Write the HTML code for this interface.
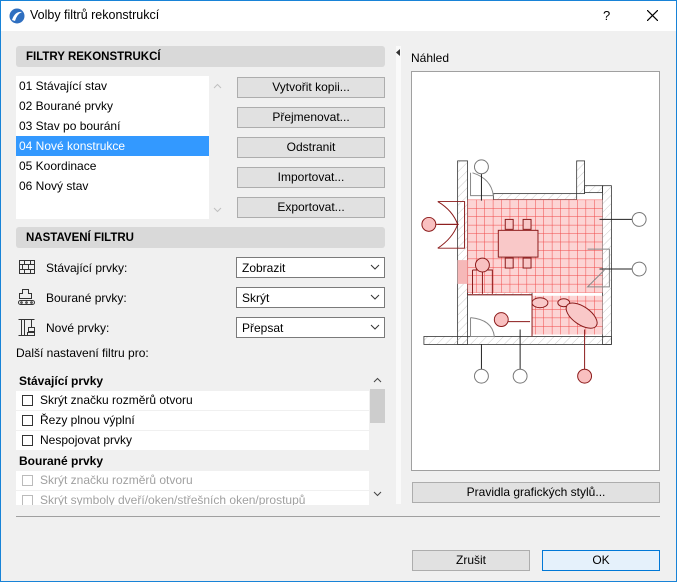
<!DOCTYPE html>
<html><head><meta charset="utf-8"><style>
*{box-sizing:border-box;margin:0;padding:0}
body{width:677px;height:582px;overflow:hidden;font-family:"Liberation Sans",sans-serif;font-size:12px;color:#000;background:#fff}
.win{position:absolute;left:0;top:0;width:677px;height:582px;background:#f0f0f0}
.frame{position:absolute;left:0;top:0;width:677px;height:582px;border:1px solid #1883d7;pointer-events:none}
.title{position:absolute;left:0;top:0;width:677px;height:31px;background:#fff}
.abs{position:absolute}
.hdr{position:absolute;left:16px;width:369px;height:21px;background:#d9d9d9;border-radius:3px;font-weight:bold;font-size:11.5px;padding:5px 0 0 10px}
.btn{position:absolute;height:21px;background:#e1e1e1;border:1px solid #adadad;text-align:center;line-height:19px}
.sel{position:absolute;left:236px;width:149px;height:21px;background:#fff;border:1px solid #7a7a7a;padding:3px 0 0 5px}
.sel svg{position:absolute;right:4px;top:6px}
.li{position:absolute;left:0;width:193px;height:20px;padding:3px 0 0 3px}
.row{position:absolute;left:0;width:353px;height:19px;background:#fff;padding:2px 0 0 24px}
.row.h{background:#f0f0f0;font-weight:bold;padding-left:3px}
.cb{position:absolute;left:6px;top:4px;width:11px;height:11px;border:1px solid #333;background:#fff}
.g{color:#a0a0a0}
.g .cb{border-color:#bbb}
</style></head><body>
<div class="win">
<div class="title">
 <svg class="abs" style="left:9px;top:8px" width="16" height="16"><circle cx="8" cy="8" r="7.5" fill="#2f6fc0"/><path d="M3 12 Q6 3 13 4 Q8 6 6 13Z" fill="#fff"/></svg>
 <div class="abs" style="left:30px;top:8px;font-size:12.5px">Volby filtrů rekonstrukcí</div>
 <div class="abs" style="left:603px;top:8px;font-size:13px">?</div>
 <svg class="abs" style="left:647px;top:10px" width="11" height="11"><path d="M0 0L11 11M11 0L0 11" stroke="#000" stroke-width="1.2"/></svg>
</div>

<div class="hdr" style="top:46px">FILTRY REKONSTRUKCÍ</div>
<div class="abs" style="left:16px;top:76px;width:193px;height:143px;background:#fff">
 <div class="li" style="top:0">01 Stávající stav</div>
 <div class="li" style="top:20px">02 Bourané prvky</div>
 <div class="li" style="top:40px">03 Stav po bourání</div>
 <div class="li" style="top:60px;background:#3399ff;color:#fff">04 Nové konstrukce</div>
 <div class="li" style="top:80px">05 Koordinace</div>
 <div class="li" style="top:100px">06 Nový stav</div>
</div>
<svg class="abs" style="left:213px;top:83px" width="9" height="6"><path d="M1 5L4.5 1.5L8 5" stroke="#c0c0c0" fill="none"/></svg>
<svg class="abs" style="left:213px;top:207px" width="9" height="6"><path d="M1 1L4.5 4.5L8 1" stroke="#c0c0c0" fill="none"/></svg>
<div class="btn" style="left:237px;top:77px;width:148px">Vytvořit kopii...</div>
<div class="btn" style="left:237px;top:107px;width:148px">Přejmenovat...</div>
<div class="btn" style="left:237px;top:137px;width:148px">Odstranit</div>
<div class="btn" style="left:237px;top:167px;width:148px">Importovat...</div>
<div class="btn" style="left:237px;top:197px;width:148px">Exportovat...</div>

<div class="hdr" style="top:227px">NASTAVENÍ FILTRU</div>
<svg class="abs" style="left:18px;top:259px" width="18" height="16" fill="none" stroke="#333"><rect x="1.5" y="1.5" width="15" height="13"/><path d="M1.5 5.5H16.5M1.5 10.5H16.5M6.5 1.5V5.5M12.5 1.5V5.5M4.5 5.5V10.5M10.5 5.5V10.5M6.5 10.5V14.5M12.5 10.5V14.5"/></svg>
<svg class="abs" style="left:17px;top:288px" width="19" height="18" fill="none" stroke="#333"><path d="M5.5 1.5H11.5V5.5H14.5V10.5H2.5V5.5H5.5Z"/><rect x="1.5" y="12.5" width="16" height="4" rx="2"/><circle cx="4.5" cy="14.5" r="0.8"/><circle cx="9.5" cy="14.5" r="0.8"/><circle cx="14.5" cy="14.5" r="0.8"/></svg>
<svg class="abs" style="left:17px;top:318px" width="19" height="18" fill="none" stroke="#333"><path d="M1.5 1.5H17.5M4.5 1.5V17.5M7.5 1.5V17.5M1.5 17.5H10.5M14.5 1.5V9.5M11.5 9.5H17.5V13.5H11.5ZM10.5 14.5H17.5V17.5H10.5Z"/></svg>
<div class="abs" style="left:46px;top:261px">Stávající prvky:</div>
<div class="abs" style="left:46px;top:291px">Bourané prvky:</div>
<div class="abs" style="left:46px;top:321px">Nové prvky:</div>
<div class="sel" style="top:257px">Zobrazit<svg width="10" height="7"><path d="M1 1L5 5L9 1" stroke="#333" fill="none"/></svg></div>
<div class="sel" style="top:287px">Skrýt<svg width="10" height="7"><path d="M1 1L5 5L9 1" stroke="#333" fill="none"/></svg></div>
<div class="sel" style="top:317px">Přepsat<svg width="10" height="7"><path d="M1 1L5 5L9 1" stroke="#333" fill="none"/></svg></div>
<div class="abs" style="left:16px;top:346px">Další nastavení filtru pro:</div>

<div class="abs" style="left:16px;top:371px;width:369px;height:134px;background:#f0f0f0;overflow:hidden">
 <div class="row h" style="top:0;height:20px;padding-top:3px">Stávající prvky</div>
 <div class="row" style="top:20px"><span class="cb"></span>Skrýt značku rozměrů otvoru</div>
 <div class="row" style="top:40px"><span class="cb"></span>Řezy plnou výplní</div>
 <div class="row" style="top:60px"><span class="cb"></span>Nespojovat prvky</div>
 <div class="row h" style="top:80px;height:20px;padding-top:3px">Bourané prvky</div>
 <div class="row g" style="top:100px"><span class="cb"></span>Skrýt značku rozměrů otvoru</div>
 <div class="row g" style="top:120px"><span class="cb"></span>Skrýt symboly dveří/oken/střešních oken/prostupů</div>
 <div class="abs" style="left:354px;top:18px;width:15px;height:34px;background:#cdcdcd"></div>
 <svg class="abs" style="left:357px;top:6px" width="9" height="6"><path d="M1 5L4.5 1.5L8 5" stroke="#444" fill="none"/></svg>
 <svg class="abs" style="left:357px;top:120px" width="9" height="6"><path d="M1 1L4.5 4.5L8 1" stroke="#444" fill="none"/></svg>
</div>

<div class="abs" style="left:396px;top:46px;width:5px;height:458px;background:#fafafa"></div>
<svg class="abs" style="left:396px;top:49px" width="5" height="7"><path d="M4 0V7L0 3.5Z" fill="#333"/></svg>

<div class="abs" style="left:411px;top:51px">Náhled</div>
<svg class="abs" style="left:411px;top:71px;border:1px solid #a0a0a0;background:#fff" width="249" height="400" viewBox="411 71 249 400">
 <defs>
  <pattern id="h" width="6" height="6" patternUnits="userSpaceOnUse" patternTransform="rotate(45)"><line x1="0" y1="0" x2="0" y2="6" stroke="#aaa" stroke-width="0.6"/></pattern>
  <pattern id="gr" x="467" y="199" width="8.5" height="8.5" patternUnits="userSpaceOnUse"><rect width="8.5" height="8.5" fill="#fcd4d4"/><path d="M0 0H8.5M0 0V8.5" stroke="#f04848" stroke-width="1"/></pattern>
 </defs>
 <g fill="url(#h)" stroke="#333" stroke-width="0.8">
  <rect x="457" y="160" width="10" height="185"/>
  <rect x="603" y="185" width="9" height="160"/>
  <rect x="577" y="160" width="8" height="33"/>
  <rect x="585" y="185" width="18" height="7"/>
  <rect x="493" y="193" width="84" height="6"/>
  <rect x="423" y="337" width="189" height="8"/>
  <rect x="467" y="290" width="65" height="5"/>
 </g>
 <rect x="467" y="199" width="136" height="94" fill="url(#gr)"/>
 <rect x="532" y="296" width="71" height="39" fill="url(#gr)"/>
 <rect x="457" y="260" width="10" height="24" fill="#f6b8b8"/>
 <g fill="#f9c8c8" stroke="#8b1a1a" stroke-width="1">
  <rect x="498" y="230" width="40" height="27"/>
  <rect x="505" y="219" width="8" height="10"/><rect x="523" y="219" width="8" height="10"/>
  <rect x="505" y="258" width="8" height="10"/><rect x="523" y="258" width="8" height="10"/>
  <ellipse cx="540" cy="303" rx="8" ry="5"/><ellipse cx="564" cy="303" rx="6" ry="4"/>
  <ellipse cx="582" cy="316" rx="18" ry="9" transform="rotate(35 582 316)"/>
 </g>
 <g fill="none" stroke="#8b1a1a" stroke-width="1">
  <path d="M437 201H464V248H437M464 201V248M437 224H458"/>
  <path d="M437 201Q452 210 457 224Q452 238 437 248"/>
  <path d="M472 270H492V294M472 270V294"/>
  <path d="M467 295H532V337M508 322H530"/>
 </g>
 <g fill="none" stroke="#888" stroke-width="1">
  <path d="M470 172V195H493Q491 178 472 172"/>
  <path d="M470 318V337H494Q492 320 470 318"/>
  <path d="M588 249H610V287H588Q600 275 605 270"/>
 </g>
 <g stroke="#222" stroke-width="1">
  <path d="M481 173V200M600 219H633M600 269H633M481 345V370M520 330V370"/>
 </g>
 <path d="M585 330V370M435 224H458M482 272V294M508 320H494" stroke="#8b1a1a"/>
 <g fill="#fff" stroke="#777">
  <circle cx="481" cy="166" r="7"/><circle cx="640" cy="219" r="7"/><circle cx="640" cy="269" r="7"/>
  <circle cx="481" cy="377" r="7"/><circle cx="520" cy="377" r="7"/>
 </g>
 <g fill="#f9c0c0" stroke="#8b1a1a">
  <circle cx="428" cy="224" r="7"/><circle cx="482" cy="265" r="7"/><circle cx="501" cy="320" r="7"/><circle cx="585" cy="377" r="7"/>
 </g>
</svg>
<div class="btn" style="left:412px;top:482px;width:248px">Pravidla grafických stylů...</div>

<div class="abs" style="left:16px;top:516px;width:644px;height:1px;background:#a0a0a0"></div>
<div class="btn" style="left:412px;top:550px;width:118px">Zrušit</div>
<div class="btn" style="left:542px;top:550px;width:118px;background:#e5f1fb;border-color:#0078d7">OK</div>
</div>
<div class="frame"></div>
</body></html>
